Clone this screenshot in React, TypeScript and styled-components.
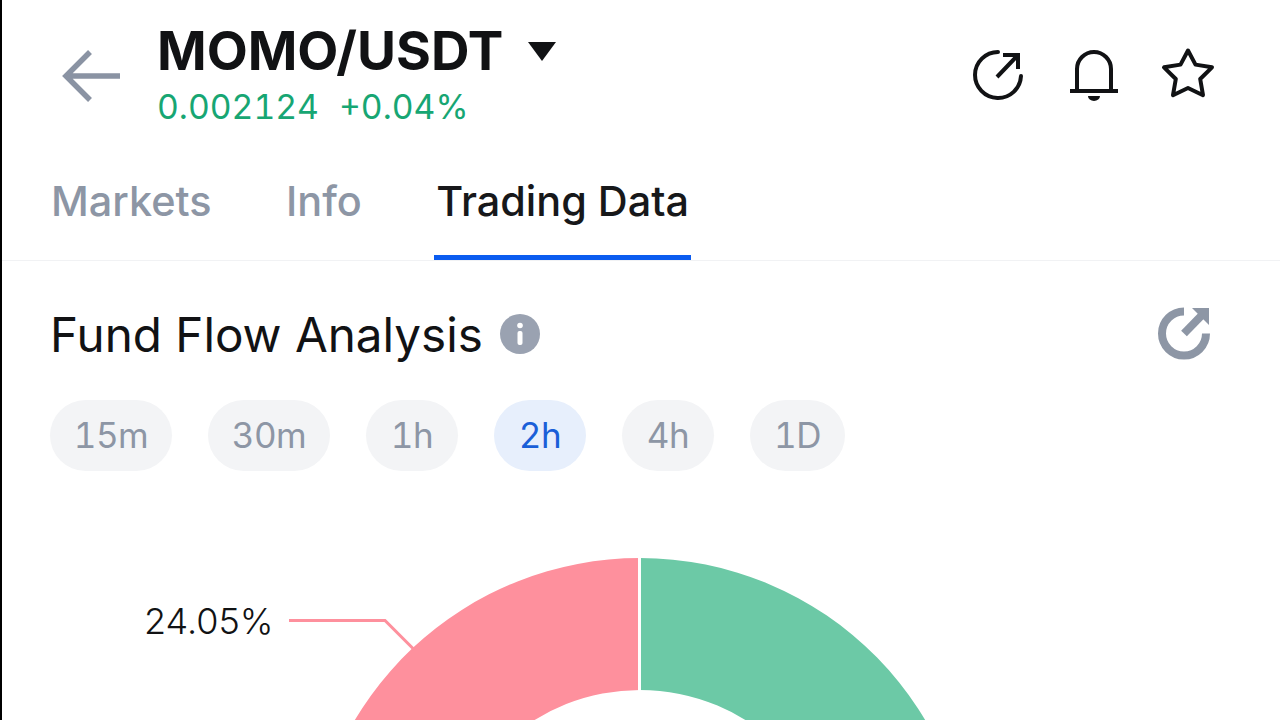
import React from 'react';
import styled, { createGlobalStyle } from 'styled-components';

const GlobalStyle = createGlobalStyle`
  html, body {
    margin: 0;
    padding: 0;
    background: #fff;
  }
  body {
    font-family: Inter, "Liberation Sans", sans-serif;
  }
`;

const Page = styled.div`
  width: 1280px;
  height: 720px;
  box-sizing: border-box;
  border-left: 2px solid #000;
  overflow: hidden;
  background: #fff;
`;

const Header = styled.header`
  display: flex;
  align-items: flex-start;
  height: 137px;
  padding: 21px 64px 0 58px;
  box-sizing: border-box;
`;

const BackIcon = styled.svg`
  width: 66px;
  height: 54px;
  margin-top: 28px;
  flex: none;
`;

const TitleBlock = styled.div`
  margin-left: 31px;
  flex: 1;
`;

const PairRow = styled.div`
  display: flex;
  align-items: center;
`;

const Pair = styled.h1`
  margin: 0;
  font-size: 53.3px;
  line-height: 60px;
  font-weight: 700;
  color: #111214;
`;

const Caret = styled.span`
  width: 0;
  height: 0;
  margin-left: 25px;
  border-left: 14.5px solid transparent;
  border-right: 14.5px solid transparent;
  border-top: 19px solid #111214;
`;

const Quote = styled.div`
  display: flex;
  gap: 20px;
  margin-top: 6px;
  font-size: 33.7px;
  line-height: 40px;
  color: #17a673;
  font-variant-numeric: tabular-nums;
`;

const Actions = styled.div`
  display: flex;
  gap: 38px;
  margin-top: 26px;
`;

const ActionIcon = styled.svg`
  width: 56px;
  height: 56px;
  fill: none;
  stroke: #111214;
  stroke-width: 4;
`;

const Tabs = styled.nav`
  display: flex;
  height: 124px;
  padding-left: 47px;
  gap: 70.5px;
  box-sizing: border-box;
  border-bottom: 1px solid #f1f2f4;
`;

const Tab = styled.div<{ $active?: boolean }>`
  height: 123px;
  box-sizing: border-box;
  padding: 39px 2px 0;
  font-size: 41.4px;
  line-height: 50px;
  font-weight: 500;
  color: ${props => (props.$active ? '#17181a' : '#8d96a5')};
  border-bottom: 5px solid ${props => (props.$active ? '#0b5cf0' : 'transparent')};
`;

const Section = styled.section`
  padding: 0 68px 0 48px;
`;

const SectionHead = styled.div`
  display: flex;
  align-items: center;
  height: 70px;
  margin-top: 39px;
`;

const SectionTitle = styled.h2`
  margin: 0;
  font-size: 47.6px;
  line-height: 70px;
  font-weight: 400;
  color: #111214;
`;

const InfoDot = styled.span`
  display: flex;
  align-items: center;
  justify-content: center;
  width: 40px;
  height: 40px;
  margin: 0 0 2px 17px;
  border-radius: 50%;
  background: #9aa2b1;
`;

const ShareGrey = styled.svg`
  width: 60px;
  height: 60px;
  margin: 2px 0 0 auto;
  fill: none;
`;

const Pills = styled.div`
  display: flex;
  gap: 36px;
  margin-top: 30px;
`;

const Pill = styled.div<{ $active?: boolean; $width: number }>`
  width: ${props => props.$width}px;
  height: 71px;
  border-radius: 36px;
  text-align: center;
  font-size: 35px;
  letter-spacing: -0.5px;
  line-height: 71px;
  font-variant-numeric: tabular-nums;
  color: ${props => (props.$active ? '#1a5fd8' : '#8d96a5')};
  background: ${props => (props.$active ? '#e7effc' : '#f3f4f6')};
`;

const Chart = styled.svg`
  display: block;
  width: 1278px;
  height: 640px;
  margin: 69px 0 0 -48px;
`;

const ChartLabel = styled.text`
  font-size: 36px;
  font-weight: 300;
  fill: #111214;
`;

const intervals = [
  { label: '15m', width: 122 },
  { label: '30m', width: 122 },
  { label: '1h', width: 92 },
  { label: '2h', width: 92 },
  { label: '4h', width: 92 },
  { label: '1D', width: 95 },
];

// donut sits below the fold, so only the top of it shows
const CX = 638;
const CY = 350;
const OUTER = 332;
const INNER = 200;

const polar = (r: number, turn: number) => {
  const a = turn * Math.PI * 2;
  return [CX + r * Math.sin(a), CY - r * Math.cos(a)];
};

const slice = (from: number, to: number) => {
  const [x1, y1] = polar(OUTER, from);
  const [x2, y2] = polar(OUTER, to);
  const [x3, y3] = polar(INNER, to);
  const [x4, y4] = polar(INNER, from);
  const large = to - from > 0.5 ? 1 : 0;
  return `M${x1} ${y1}A${OUTER} ${OUTER} 0 ${large} 1 ${x2} ${y2}L${x3} ${y3}A${INNER} ${INNER} 0 ${large} 0 ${x4} ${y4}Z`;
};

export default function App() {
  return (
    <Page>
      <GlobalStyle />
      <Header>
        <BackIcon viewBox="0 0 66 54" fill="none" stroke="#8a93a3" strokeWidth="5.5">
          <path d="M60 27H6M30 3L6 27l24 24" />
        </BackIcon>
        <TitleBlock>
          <PairRow>
            <Pair>MOMO/USDT</Pair>
            <Caret />
          </PairRow>
          <Quote>
            <span>0.002124</span>
            <span>+0.04%</span>
          </Quote>
        </TitleBlock>
        <Actions>
          <ActionIcon viewBox="0 0 56 56" strokeLinecap="round">
            <path d="M26 5A23 23 0 1 0 49 29" />
            <path d="M25 30L46 8M31 8h15v14" strokeLinecap="butt" />
          </ActionIcon>
          <ActionIcon viewBox="0 0 56 56">
            <path d="M4 44h48M11 44V22a17 17 0 0 1 34 0v22" />
            <path d="M22 49h12a6 5 0 0 1-12 0z" fill="#111214" stroke="none" />
          </ActionIcon>
          <ActionIcon viewBox="0 0 56 56" strokeLinejoin="round" strokeWidth="4.5">
            <path d="M28 3.500L35.500 17.600 52 20.300 40.200 32 43 48.200 28 41 13 48.200 15.800 32 4 20.300 20.500 17.600z" />
          </ActionIcon>
        </Actions>
      </Header>
      <Tabs>
        <Tab>Markets</Tab>
        <Tab>Info</Tab>
        <Tab $active>Trading Data</Tab>
      </Tabs>
      <Section>
        <SectionHead>
          <SectionTitle>Fund Flow Analysis</SectionTitle>
          <InfoDot>
            <svg width="8" height="24" viewBox="0 0 8 24" fill="#fff">
              <circle cx="4" cy="3.500" r="2.800" />
              <rect x="1.500" y="9" width="5" height="14" rx="2" />
            </svg>
          </InfoDot>
          <ShareGrey viewBox="0 0 60 60">
            <path d="M32 5.500A22 22 0 1 0 54 27.500" stroke="#8d96a5" strokeWidth="8" />
            <path d="M32 27.500L51 8" stroke="#8d96a5" strokeWidth="8" />
            <path d="M40 2h17v17z" fill="#8d96a5" />
          </ShareGrey>
        </SectionHead>
        <Pills>
          {intervals.map(({ label, width }) => (
            <Pill key={label} $width={width} $active={label === '2h'}>
              {label}
            </Pill>
          ))}
        </Pills>
        <Chart viewBox="0 0 1278 640">
          <path d={slice(-0.2405, 0)} fill="#fe909d" />
          <path d={slice(0, 0.7595)} fill="#6cc9a6" />
          <path d="M637.500 10v200" stroke="#fff" strokeWidth="3" />
          <path d="M287 80.500h96l29 29" fill="none" stroke="#fe909d" strokeWidth="3" />
          <ChartLabel x="142" y="94">
            24.05%
          </ChartLabel>
        </Chart>
      </Section>
    </Page>
  );
}
